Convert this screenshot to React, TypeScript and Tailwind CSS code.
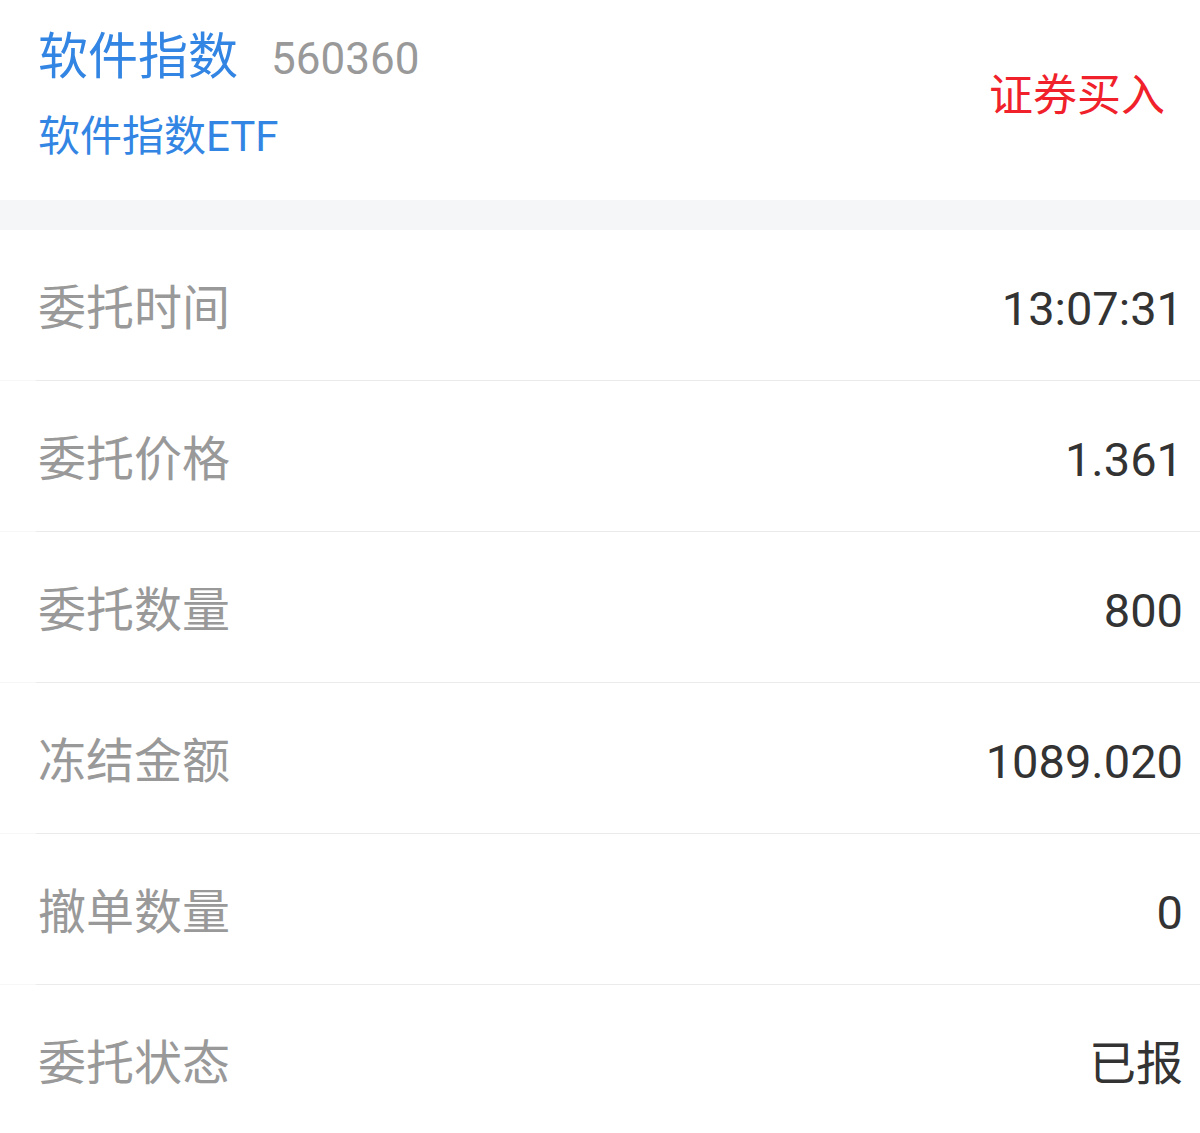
import React from "react";

const rows: [string, string][] = [
  ["委托时间", "13:07:31"],
  ["委托价格", "1.361"],
  ["委托数量", "800"],
  ["冻结金额", "1089.020"],
  ["撤单数量", "0"],
  ["委托状态", "已报"],
];

export default function App() {
  return (
    <div
      className="w-[1200px] h-[1133px] overflow-hidden bg-white"
      style={{ fontFamily: 'Roboto, "Noto Sans CJK SC", sans-serif' }}
    >
      <div className="h-[200px] flex items-center justify-between pl-[38px] pr-[35px]">
        <div className="flex flex-col">
          <div className="flex items-baseline h-[60px] mt-[-11px]">
            <span className="text-[50px] leading-[60px] text-[#3385e3]">软件指数</span>
            <span className="text-[44px] leading-[60px] text-[#999999] ml-[33px]">560360</span>
          </div>
          <div className="text-[42px] leading-[50px] text-[#3385e3] mt-[25px]">软件指数ETF</div>
        </div>
        <div className="text-[44px] leading-[50px] text-[#f0212a] mt-[-8px]">证券买入</div>
      </div>
      <div className="h-[30px] bg-[#f5f6f8]" />
      {rows.map(([k, v], i) => (
        <div key={k}>
          {i > 0 && (
            <div className="flex h-px">
              <div className="w-[36px] bg-[#f7f7f7]" />
              <div className="flex-1 bg-[#ebebeb]" />
            </div>
          )}
          <div className="h-[150px] flex items-center justify-between pl-[38px] pr-[17px] pt-[8px]">
            <span className="text-[48px] text-[#999999]">{k}</span>
            <span className="text-[47px] text-[#333333]">{v}</span>
          </div>
        </div>
      ))}
    </div>
  );
}
